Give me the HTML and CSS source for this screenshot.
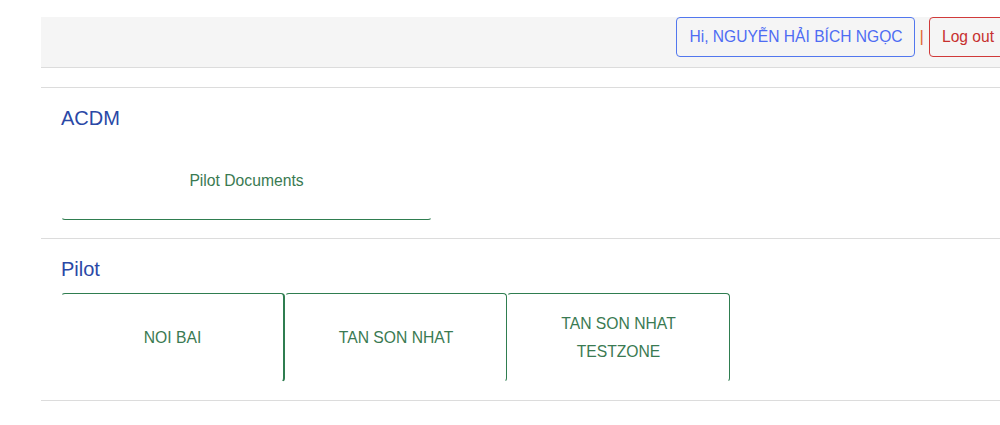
FILE: index.html
```html
<!DOCTYPE html>
<html lang="vi">
<head>
    <meta charset="UTF-8">
    <meta name="viewport" content="width=device-width, initial-scale=1.0">
    <title>ACDM</title>
    <link rel="stylesheet" href="styles.css">
</head>
<body>
    <div class="page">
        <div class="topbar">
            <a class="btn btn-user" href="#">Hi, NGUYỄN HẢI BÍCH NGỌC</a>
            <span class="sep">|</span>
            <a class="btn btn-logout" href="#">Log out</a>
        </div>

        <div class="group">
            <h2>ACDM</h2>
            <div class="tiles">
                <a class="tile tile-doc" href="#">Pilot Documents</a>
            </div>
        </div>

        <div class="group">
            <h2>Pilot</h2>
            <div class="tiles">
                <a class="tile tile-a" href="#">NOI BAI</a>
                <a class="tile tile-b" href="#">TAN SON NHAT</a>
                <a class="tile tile-c" href="#">TAN SON NHAT TESTZONE</a>
            </div>
        </div>
        <div class="group"></div>
    </div>
</body>
</html>
```

FILE: styles.css
```css
html, body {
    margin: 0;
    padding: 0;
    overflow: hidden;
    background: #fff;
}
body {
    font-family: "Liberation Sans", Arial, sans-serif;
    color: #333;
}
.page {
    margin: 17px 0 0 41px;
    width: 1000px;
}
.topbar {
    display: flex;
    align-items: flex-start;
    justify-content: flex-end;
    height: 50px;
    padding-right: 34px;
    background: #f5f5f5;
    border-bottom: 1px solid #dcdcdc;
    margin-bottom: 19px;
}
.btn {
    display: flex;
    align-items: center;
    height: 38px;
    padding: 0 12px;
    border: 1px solid;
    border-radius: 4px;
    font-size: 15.6px;
    text-decoration: none;
}
.btn-user {
    color: #4e6cf3;
    border-color: #5277ee;
    padding-right: 11px;
}
.btn-logout {
    color: #c7302f;
    border-color: #d03a3a;
}
.sep {
    color: #e06a34;
    font-size: 17px;
    line-height: 40px;
    margin: 0 5px;
}
.group {
    border-top: 1px solid #dcdcdc;
    padding: 19px 0 18px 20px;
}
.group:last-child {
    padding: 0;
}
.group h2 {
    margin: 0 0 13px;
    font-size: 20px;
    line-height: 22px;
    font-weight: normal;
    color: #2a48a6;
}
.tiles {
    display: flex;
}
.tile {
    display: flex;
    align-items: center;
    justify-content: center;
    text-align: center;
    box-sizing: border-box;
    width: 222px;
    height: 89px;
    padding: 0 20px;
    font-size: 15.7px;
    line-height: 28px;
    color: #3a7a52;
    text-decoration: none;
    border: 1px solid transparent;
    border-radius: 4px;
}
.tile-doc {
    width: 371px;
    height: 78px;
    border-bottom-color: #2f7d50;
}
.tile-a {
    width: 224px;
    border-top-color: #2f7d50;
    border-right-color: #2f7d50;
    border-right-width: 2px;
}
.tile-b {
    border-top-color: #2f7d50;
    border-right-color: #2f7d50;
}
.tile-c {
    width: 223px;
    border-top-color: #2f7d50;
    border-right-color: #2f7d50;
}
```
